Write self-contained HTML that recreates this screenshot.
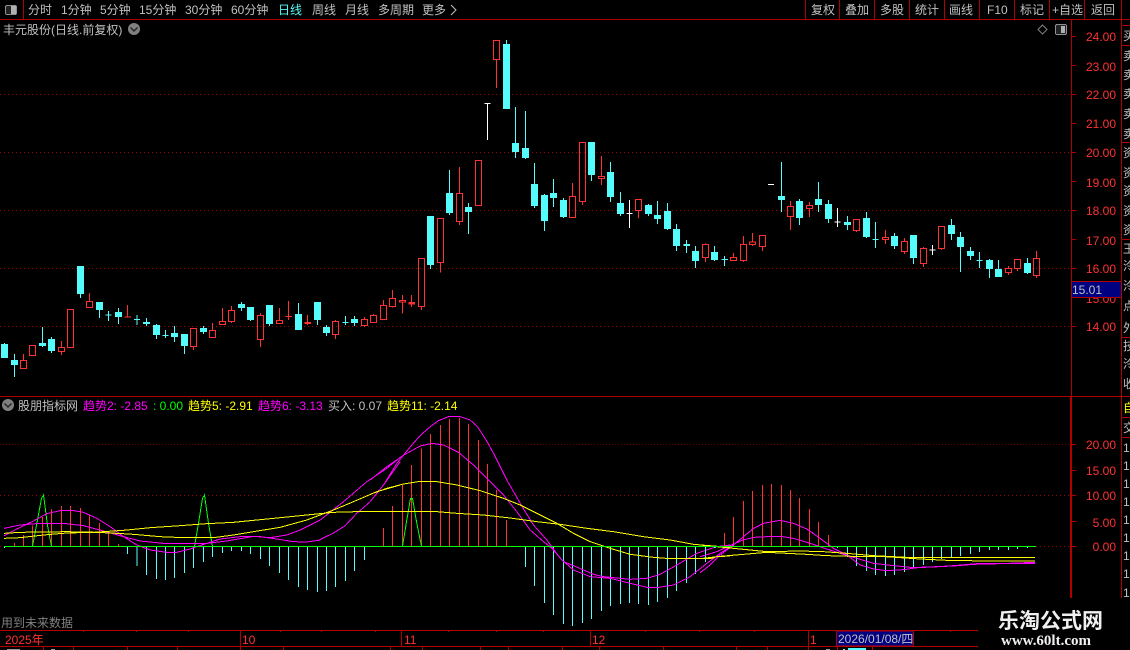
<!DOCTYPE html>
<html lang="zh">
<head>
<meta charset="utf-8">
<title>K线</title>
<style>
html,body{margin:0;padding:0;background:#000;width:1130px;height:650px;overflow:hidden}
svg{display:block}
text{font-family:"Liberation Sans","WenQuanYi Zen Hei","Noto Sans CJK SC",sans-serif;font-size:12px;fill:#c0c0c0}
.ax{fill:#ff3232;text-anchor:end}
.m{fill:#ff00ff}.y{fill:#ffff00}.g{fill:#00ff00}.r{fill:#ff3232}.c{fill:#54fcfc}
.side{font-size:12px;fill:#c0c0c0}
</style>
</head>
<body>
<svg width="1130" height="650" viewBox="0 0 1130 650" xmlns="http://www.w3.org/2000/svg">
<rect width="1130" height="650" fill="#000"/>

<!-- frame lines -->
<g shape-rendering="crispEdges" fill="none" stroke="#b00000">
<path d="M0 19.5H1130M23.5 0V19M805.5 0V19M839.5 0V19M874.5 0V19M909.5 0V19M944.5 0V19M979.5 0V19M1014.5 0V19M1049.5 0V19M1084.5 0V19M1121.5 0V598"/>
<path d="M1071.5 19V396"/>
<path d="M1071 397V598" stroke-width="2"/>
<path d="M0 396.5H1130"/>
<path d="M1121 25.5H1130M1121 45.5H1130M1121 142.5H1130M1121 239.5H1130M1121 337.5H1130M1121 417.5H1130M1121 437.5H1130"/>
<!-- price ticks -->
<path d="M1071 36.5h5M1071 65.5h5M1071 94.5h5M1071 123.5h5M1071 152.5h5M1071 181.5h5M1071 210.5h5M1071 239.5h5M1071 268.5h5M1071 297.5h5M1071 326.5h5"/>
<path d="M1071 444.5h5M1071 470.5h5M1071 495.5h5M1071 521.5h5M1071 546.5h5"/>
<!-- grid dots -->
<path stroke-dasharray="1 3" stroke="#a00000" d="M0 94.5H1070M0 152.5H1070M0 210.5H1070M0 268.5H1070M0 326.5H1070"/>
<path stroke-dasharray="1 3" stroke="#a00000" d="M0 495.5H1070M0 546.5H1070"/>
<path stroke-dasharray="1 2" stroke="#700000" d="M0 444.5H1070"/>
<!-- date strip -->
<path d="M0 630.5H978M0 646.5H978M240.5 631V646M401.5 631V646M590.5 631V646M808.5 631V646"/>
<path d="M83.5 630v2M136.5 630v2M188.5 630v2M280.5 630v2M321.5 630v2M375.5 630v2M448.5 630v2M496.5 630v2M543.5 630v2M645.5 630v2M699.5 630v2M754.5 630v2M950.5 630v2"/>
<path d="M43.5 647v3M73.5 647v3M127.5 647v3M177.5 647v3M240.5 647v3M283.5 647v3M390.5 647v3M422.5 647v3M480.5 647v3M508.5 647v3M562.5 647v3M599.5 647v3M663.5 647v3M736.5 647v3M767.5 647v3M808.5 647v3M837.5 647v3M872.5 647v3"/>
</g>

<!-- Candles -->
<g shape-rendering="crispEdges" fill="none">
<!-- section 1 -->
<g transform="matrix(.33333 0 0 .33333 .1667 250)">
<path stroke="#54fcfc" stroke-width="21" d="M13 282V324M43 330V345M127 279V288M154 267V303M241 48V132M298 156V180M355 186V201M439 216V222M469 225V255M523 249V261M553 252V288M610 234V246M724 162V174M751 171V210M808 165V222M895 192V240M952 156V210M979 231V249M1063 207V219"/>
<path stroke="#54fcfc" stroke-width="3" d="M13 279V282M43 312V381M127 231V291M154 261V309M241 132V144M298 180V204M325 183V213M355 174V222M411 195V225M439 204V228M469 222V267M496 240V264M523 228V276M553 288V312M610 228V252M724 156V183M751 210V213M808 222V228M895 159V192M952 210V225M979 225V258M1036 198V225M1063 198V228M316 195h18M402 208h18M487 257h18M1027 217h18"/>
<path stroke="#ff3232" stroke-width="3" d="M61 332h18V355h-18zM88 287h18V316h-18zM175 293h18V304h-18zM202 179h18V292h-18zM259 155h18V172h-18zM571 236h18V289h-18zM628 242h18V262h-18zM658 215h18V223h-18zM685 182h18V214h-18zM772 197h18V268h-18zM829 212h18V220h-18zM997 215h18V253h-18zM1084 209h18V226h-18zM1111 197h18V217h-18zM1141 167h18V208h-18zM1168 146h18V169h-18zM1198 151h18V156h-18z"/>
<path stroke="#ff3232" stroke-width="3" d="M373 201.5h19M856 199.5h19M913 218h19M913 220h19M1225 158h19M1225 160h19M1225 162h19"/>
<path stroke="#ff3232" stroke-width="3" d="M70 312V331M184 273V292M184 305V315M268 129V154M382 165V200M580 290V300M637 219V241M667 174V214M694 168V181M694 215V219M781 189V196M781 269V291M838 174V211M865 153V210M922 195V225M1006 210V214M1006 254V267M1093 201V208M1093 227V231M1120 192V196M1150 150V166M1177 120V145M1177 170V173M1207 135V150M1207 157V190M1234 135V171"/>
</g>
<!-- section 2 -->
<g transform="matrix(.33333 0 0 .33333 400.1667 30)">
<path stroke="#54fcfc" stroke-width="21" d="M91 558V705M148 489V549M205 531V546M319 42V237M346 339V366M376 354V384M403 462V528M433 495V573M460 489V504M490 510V561M574 336V435M631 426V501M661 519V552M745 525V552M772 555V567M802 543V597M829 597V648M886 663V693M943 666V690"/>
<path stroke="#54fcfc" stroke-width="3" d="M91 705V717M148 420V555M205 519V612M319 30V42M346 231V384M376 243V387M403 399V534M433 492V603M460 447V531M490 504V564M574 435V453M631 396V516M661 486V558M745 522V558M772 513V582M802 519V600M829 582V663M859 630V669M886 648V714M943 648V693M973 678V708M850 644h19M850 647h19M964 688h19"/>
<path stroke="#ff3232" stroke-width="3" d="M55 686h18V829h-18zM112 566h18V697h-18zM169 491h18V574h-18zM226 392h18V526h-18zM280 32h18V88h-18zM508 500h18V562h-18zM538 338h18V514h-18zM595 440h18V445h-18zM706 509h18V541h-18zM907 644h18V682h-18z"/>
<path stroke="#ff3232" stroke-width="3" d="M64 830V840M121 698V728M178 411V490M178 575V585M289 89V174M517 459V499M547 515V525M604 378V439M604 446V465M715 542V564M916 640V643M916 683V696"/>
<path stroke="#fff" stroke-width="3" d="M253 220h18M262 220V330M679 550h18M688 510V594"/>
</g>
<!-- section 3 -->
<g transform="matrix(.33333 0 0 .33333 720.1667 150)">
<path stroke="#54fcfc" stroke-width="21" d="M184 138V150M238 153V204M295 147V165M325 162V207M382 216V225M439 204V261M523 258V288M580 255V324M694 225V252M721 261V291M751 303V318M808 330V357M835 357V381M922 339V369"/>
<path stroke="#54fcfc" stroke-width="3" d="M184 36V186M238 147V225M295 96V186M325 150V219M382 198V240M439 186V264M466 216V294M523 249V297M580 324V342M694 207V270M721 246V366M751 291V330M778 306V354M808 327V384M835 330V357M922 324V372M457 268h18M769 331h18"/>
<path stroke="#ff3232" stroke-width="3" d="M31 323h18V331h-18zM61 284h18V331h-18zM88 276h18V283h-18zM118 257h18V289h-18zM202 170h18V199h-18zM259 167h18V175h-18zM400 209h18V241h-18zM487 263h18V268h-18zM544 275h18V304h-18zM601 296h18V340h-18zM655 230h18V295h-18zM856 356h18V367h-18zM883 329h18V355h-18zM940 326h18V376h-18z"/>
<path stroke="#ff3232" stroke-width="3" d="M40 309V322M70 258V283M70 332V336M97 249V275M97 284V288M127 290V303M211 153V169M211 200V240M268 156V166M268 176V201M409 242V246M496 240V262M496 269V282M553 264V274M553 305V312M610 291V295M610 341V351M664 296V300M865 348V355M865 368V375M892 356V363M949 303V325M949 377V384"/>
<path stroke="#fff" stroke-width="3" d="M144 103h18M343 216h18M352 174V231M628 300h18M637 285V315"/>
</g>
</g>

<!-- Indicator -->
<g shape-rendering="crispEdges" fill="none" stroke-width="3">
<g transform="matrix(.33333 0 0 .33333 .1667 395)">
<path stroke="#ff3232" d="M43 454V444M70 454V420M97 454V392M127 454V366M154 454V342M184 454V333M211 454V333M241 454V339M268 454V358M298 454V384M325 454V414M355 454V447M1150 454V399M1177 454V333"/>
<path stroke="#54fcfc" d="M13 454V459M382 454V477M411 454V513M439 454V540M469 454V552M496 454V555M523 454V549M553 454V534M580 454V519M610 454V501M637 454V486M667 454V474M694 454V468M724 454V468M751 454V477M781 454V492M808 454V513M838 454V534M865 454V555M895 454V576M922 454V585M952 454V591M979 454V588M1006 454V576M1036 454V558M1063 454V528M1093 454V495"/>
<path stroke="#00ff00" d="M97 454L112 375L124 310L130 300L136 345L142 392L154 454M583 454L595 385L607 310L613 300L625 385L637 454"/>
<polyline stroke="#ff00ff" points="12,422 50,402 100,378 140,356 180,347 215,346 250,352 290,370 330,395 370,425 410,450 450,465 500,472 530,472 570,462 610,448 660,432 720,425 780,425 830,432 880,440 920,441 955,436 1000,414 1035,392 1070,355 1110,320 1150,270 1200,200"/>
<polyline stroke="#ff00ff" points="12,400 60,390 120,385 190,385 250,392 310,408 370,425 420,438 490,445 560,446 620,445 680,438 760,424 810,428 860,420 900,405 960,375 1030,320 1100,260 1160,220 1200,187"/>
<polyline stroke="#ffff00" points="12,415 60,412 130,411 200,410 290,412 350,415 400,418 480,425 550,428 640,428 700,420 760,410 840,397 920,375 1000,345 1060,320 1130,290 1200,270"/>
<polyline stroke="#ffff00" points="12,430 60,428 130,420 200,414 280,412 370,406 450,398 540,392 620,386 700,382 800,372 900,362 1000,352 1100,349 1200,349"/>
</g>
<g transform="matrix(.33333 0 0 .33333 370.1667 395)">
<path stroke="#ff3232" d="M97 454V270M124 454V210M154 454V160M181 454V117M211 454V90M238 454V72M268 454V69M295 454V87M325 454V135M352 454V207M379 454V285M409 454V375M1063 454V414"/>
<path stroke="#54fcfc" d="M466 454V516M493 454V573M523 454V624M550 454V660M580 454V687M607 454V693M637 454V684M664 454V672M694 454V648M721 454V633M751 454V627M778 454V624M805 454V627M835 454V630M862 454V621M892 454V609M919 454V588M949 454V564M976 454V537M1006 454V501M1036 454V459"/>
<path stroke="#00ff00" d="M97 454L109 380L121 310L127 310L139 380L154 454"/>
<polyline stroke="#ff00ff" points="0,320 40,270 80,205 125,150 150,122 180,95 205,77 235,65 270,65 300,75 320,93 335,115 352,142 370,175 390,215 410,255 450,325 490,390 530,435 570,490 610,525 660,545 720,550 780,565 835,578 860,578 910,570 960,545 1010,505 1050,475 1080,455"/>
<polyline stroke="#ff00ff" points="0,255 50,215 105,178 150,153 185,145 220,150 265,172 310,210 355,255 400,300 440,350 480,405 520,440 545,460 580,500 610,512 670,538 700,545 780,553 830,550 870,538 920,510 980,475 1040,455 1080,450"/>
<polyline stroke="#ffff00" points="0,298 50,280 100,267 150,259 200,260 260,270 330,287 400,310 450,330 500,355 560,385 610,415 660,440 720,460 780,478 850,487 900,491 980,490 1020,491 1040,485 1080,483"/>
<polyline stroke="#ffff00" points="0,349 100,349 200,350 260,355 340,360 420,369 500,380 570,388 650,400 730,410 820,425 900,435 970,448 1030,453 1080,457"/>
</g>
<g transform="matrix(.33333 0 0 .33333 700.1667 395)">
<path stroke="#ff3232" d="M73 454V414M100 454V366M130 454V318M157 454V288M187 454V270M214 454V267M244 454V270M271 454V285M298 454V309M328 454V342M355 454V381M385 454V420"/>
<path stroke="#54fcfc" d="M16 454V501M43 454V459M412 454V459M442 454V486M469 454V513M499 454V528M526 454V540M556 454V543M583 454V540M613 454V531M640 454V519M670 454V510M697 454V501M724 454V492M754 454V486M781 454V483M811 454V477M838 454V471M868 454V465M895 454V465M925 454V465M952 454V462M982 454V459"/>
<polyline stroke="#ff00ff" points="0,533 30,510 60,480 100,450 130,425 160,400 190,385 240,376 280,385 320,402 360,430 400,460 440,480 480,510 520,522 560,527 610,524 660,517 760,513 820,508 900,506 1005,502"/>
<polyline stroke="#ff00ff" points="0,485 50,470 90,452 130,434 170,426 240,424 280,430 330,445 380,462 430,478 470,490 520,505 580,512 640,518 700,516 760,512 830,506 1005,505"/>
<polyline stroke="#ffff00" points="0,450 60,456 130,463 200,470 300,468 370,470 440,475 520,482 620,487 760,487 1005,487"/>
<polyline stroke="#ffff00" points="0,491 60,484 130,478 200,472 260,475 320,478 380,482 460,484 540,484 660,492 740,496 860,498 1005,498"/>
</g>
<path stroke="#00ff00" stroke-width="1" d="M4 546.5H1036"/>
</g>

<!-- toolbar -->
<text x="28" y="14">分时</text>
<text x="61" y="14">1分钟</text>
<text x="100" y="14">5分钟</text>
<text x="139" y="14">15分钟</text>
<text x="185" y="14">30分钟</text>
<text x="231" y="14">60分钟</text>
<text x="278" y="14" class="c">日线</text>
<text x="312" y="14">周线</text>
<text x="345" y="14">月线</text>
<text x="378" y="14">多周期</text>
<text x="422" y="14">更多</text>
<path d="M451 5l5 5-5 5" fill="none" stroke="#c0c0c0"/>
<text x="811" y="14">复权</text>
<text x="845" y="14">叠加</text>
<text x="880" y="14">多股</text>
<text x="915" y="14">统计</text>
<text x="949" y="14">画线</text>
<text x="987" y="14">F10</text>
<text x="1020" y="14">标记</text>
<text x="1052" y="14">+自选</text>
<text x="1091" y="14">返回</text>

<!-- layout icons -->
<g shape-rendering="crispEdges">
<rect x="5.5" y="5.5" width="11" height="9" rx="1.5" fill="#222" stroke="#909090"/>
<rect x="11" y="6" width="5" height="8" fill="#b0b0b0"/>
<rect x="1055.5" y="24.5" width="11" height="10" rx="1.5" fill="#222" stroke="#909090"/>
<rect x="1061" y="26" width="4" height="7" fill="#b0b0b0"/>
</g>
<path d="M1042.5 25l4.5 4.5-4.5 4.5-4.5-4.5z" fill="none" stroke="#808080"/>

<!-- header -->
<text x="3" y="34">丰元股份(日线.前复权)</text>
<circle cx="134" cy="29" r="6" fill="#808080"/>
<path d="M130.5 27.5l3.5 3.5 3.5-3.5" fill="none" stroke="#222" stroke-width="1.4"/>

<!-- price axis -->
<text class="ax" x="1116" y="41">24.00</text>
<text class="ax" x="1116" y="71">23.00</text>
<text class="ax" x="1116" y="99">22.00</text>
<text class="ax" x="1116" y="128">21.00</text>
<text class="ax" x="1116" y="157">20.00</text>
<text class="ax" x="1116" y="187">19.00</text>
<text class="ax" x="1116" y="215">18.00</text>
<text class="ax" x="1116" y="245">17.00</text>
<text class="ax" x="1116" y="273">16.00</text>
<text class="ax" x="1116" y="303">15.00</text>
<text class="ax" x="1116" y="331">14.00</text>
<rect x="1071.5" y="281.5" width="50" height="16" fill="#000080" stroke="#b00000" shape-rendering="crispEdges"/>
<text x="1072" y="294">15.01</text>

<!-- indicator header -->
<circle cx="8" cy="405" r="6" fill="#808080"/>
<path d="M4.5 403.5l3.5 3.5 3.5-3.5" fill="none" stroke="#222" stroke-width="1.4"/>
<text x="18" y="410">股朋指标网</text>
<text x="83" y="410" class="m">趋势2: -2.85</text>
<text x="153" y="410" class="g">: 0.00</text>
<text x="188" y="410" class="y">趋势5: -2.91</text>
<text x="258" y="410" class="m">趋势6: -3.13</text>
<text x="328" y="410">买入: 0.07</text>
<text x="387" y="410" class="y">趋势11: -2.14</text>

<!-- indicator axis -->
<text class="ax" x="1116" y="449">20.00</text>
<text class="ax" x="1116" y="475">15.00</text>
<text class="ax" x="1116" y="500">10.00</text>
<text class="ax" x="1116" y="527">5.00</text>
<text class="ax" x="1116" y="551">0.00</text>

<text x="1" y="627" style="fill:#808080">用到未来数据</text>

<!-- date strip text -->
<text x="5" y="644" class="r">2025年</text>
<text x="242" y="644" class="r">10</text>
<text x="404" y="644" class="r">11</text>
<text x="592" y="644" class="r">12</text>
<text x="810" y="644" class="r">1</text>
<rect x="836.5" y="631" width="77" height="15" fill="#000080" stroke="#b00000" shape-rendering="crispEdges"/>
<text x="838" y="643">2026/01/08/四</text>
<g shape-rendering="crispEdges">
<rect x="7" y="649" width="13" height="1" fill="#999"/>
<rect x="51" y="649" width="4" height="1" fill="#999"/>
<rect x="826" y="649" width="4" height="1" fill="#999"/>
<rect x="843" y="649" width="2" height="1" fill="#54fcfc"/>
<rect x="848" y="648" width="18" height="2" fill="#54fcfc"/>
</g>

<!-- right side column -->
<svg x="1122" y="20" width="8" height="580" viewBox="1122 20 8 580">
<text class="side" x="1123" y="40">买</text>
<text class="side" x="1123" y="60">卖</text>
<text class="side" x="1123" y="79">卖</text>
<text class="side" x="1123" y="98">卖</text>
<text class="side" x="1123" y="118">卖</text>
<text class="side" x="1123" y="138">卖</text>
<text class="side" x="1123" y="157">资</text>
<text class="side" x="1123" y="177">资</text>
<text class="side" x="1123" y="195">资</text>
<text class="side" x="1123" y="215">资</text>
<text class="side" x="1123" y="234">资</text>
<text class="side" x="1123" y="253">王</text>
<text class="side" x="1123" y="270">泠</text>
<text class="side" x="1123" y="290">泠</text>
<text class="side" x="1123" y="310">点</text>
<text class="side" x="1123" y="332">外</text>
<text class="side" x="1123" y="350">技</text>
<text class="side" x="1123" y="368">泠</text>
<text class="side" x="1123" y="388">收</text>
<text class="y" x="1123" y="412">自</text>
<text class="side" x="1123" y="432">交</text>
<text class="side" x="1123" y="452">1</text>
<text class="side" x="1123" y="470">1</text>
<text class="side" x="1123" y="488">1</text>
<text class="side" x="1123" y="506">1</text>
<text class="side" x="1123" y="524">1</text>
<text class="side" x="1123" y="542">1</text>
<text class="side" x="1123" y="560">1</text>
<text class="side" x="1123" y="578">1</text>
<text class="side" x="1123" y="597">1</text>
</svg>

<!-- watermark -->
<text x="998" y="628" style="font-family:'Noto Sans CJK SC',sans-serif;font-size:21px;font-weight:700;fill:#f0f0f0">乐淘公式网</text>
<text x="1001" y="645" textLength="90" style="font-family:'Liberation Serif',serif;font-size:15px;font-weight:700;fill:#f0f0f0">www.60lt.com</text>
</svg>
</body>
</html>
